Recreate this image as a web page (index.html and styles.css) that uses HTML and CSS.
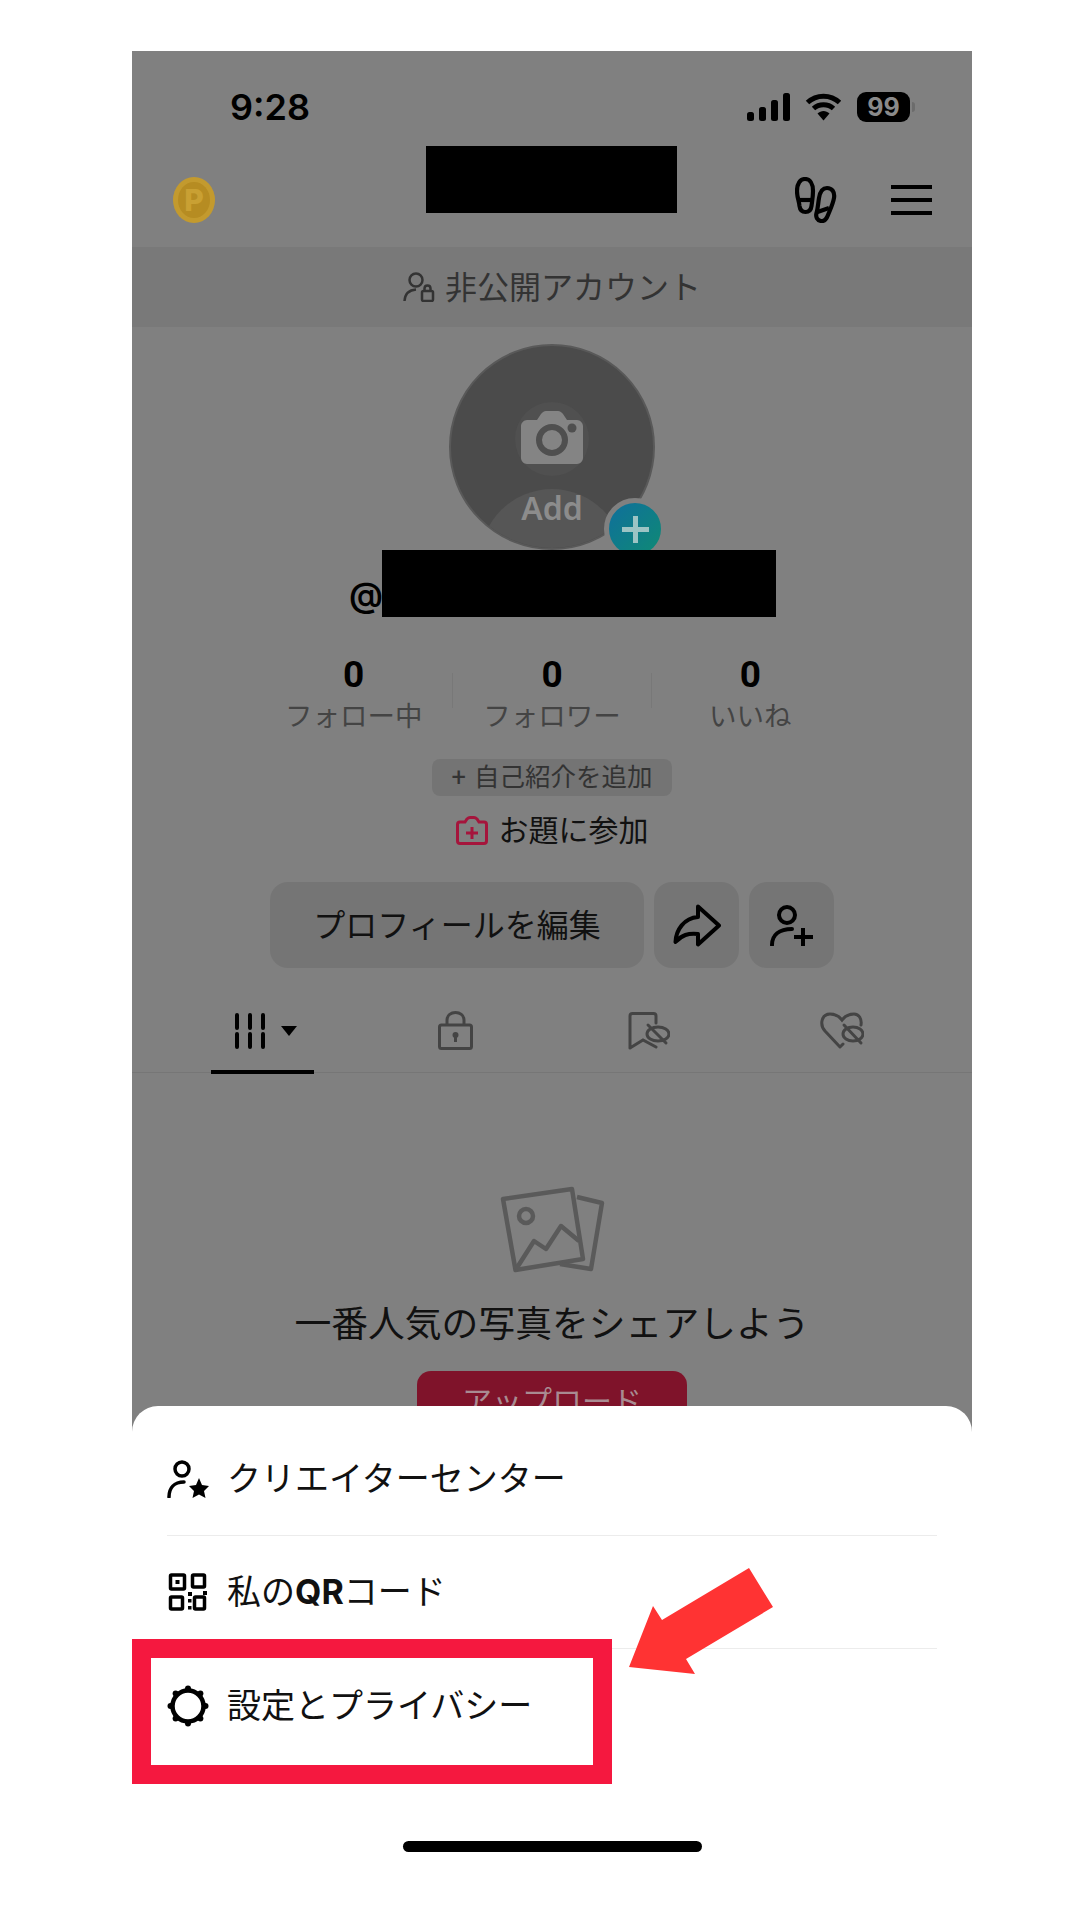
FILE: index.html
```html
<!DOCTYPE html>
<html lang="ja">
<head>
<meta charset="utf-8">
<title>プロフィール</title>
<link rel="stylesheet" href="styles.css">
</head>
<body>
<div class="screen">
    <div class="dimmed">
        <!-- status bar -->
        <div class="statusbar">
            <span class="clock">9:28</span>
            <div class="status-icons">
                <svg class="ic-signal" width="43" height="28" viewBox="0 0 43 28"><rect x="0" y="19" width="7" height="9" rx="2.5"/><rect x="12" y="14" width="7" height="14" rx="2.5"/><rect x="24" y="7" width="7" height="21" rx="2.5"/><rect x="36" y="0" width="7" height="28" rx="2.5"/></svg>
                <svg class="ic-wifi" width="37" height="28" viewBox="0 0 37 28"><path d="M2.5 9.5C11.500 1 25.500 1 34.500 9.500M8.500 15.500C14 10.500 23 10.500 28.500 15.500" fill="none" stroke="#000" stroke-width="5"/><path d="M12.500 20.500C16 17 21 17 24.500 20.500L18.500 27.500Z"/></svg>
                <div class="battery"><span>99</span></div>
                <i class="battery-nub"></i>
            </div>
        </div>

        <!-- top bar -->
        <div class="topbar">
            <svg width="42" height="46" viewBox="0 0 42 46"><ellipse cx="21" cy="23" rx="21" ry="23" fill="#c39a2e"/><ellipse cx="21" cy="23" rx="16" ry="18" fill="#b68c22"/><text x="21" y="34" class="coin-p" text-anchor="middle">P</text></svg>
            <div class="topbar-right">
                <svg width="42" height="46" viewBox="0 0 42 46" fill="none" stroke="#000" stroke-width="4.200"><path d="M10 2C15 2 18 7 18 14C18 20 17 25 16.500 29C16 33 14 35 10.500 35C7 35 5 33 4.500 29C4 24 2 20 2 14C2 7 5 2 10 2Z"/><path d="M4 23H17"/><path d="M32 11C37 11 40 15 39 21C38 27 35 33 33 38C31.500 42 29 44.500 26 44C22 43.500 20.500 40 21.500 36C23 31 23 27 24 21C25 15 27 11 32 11Z"/><path d="M22.500 35L34 31"/></svg>
                <div class="burger"><i></i><i></i><i></i></div>
            </div>
        </div>

        <div class="banner">
            <svg width="32" height="30" viewBox="0 0 32 30" fill="none" stroke="#333" stroke-width="2.500"><circle cx="13" cy="8" r="6.500"/><path d="M1.500 29C2 22 6 18 13 17.500"/><rect x="19" y="19" width="11" height="10" rx="1.500"/><path d="M21.500 19V16.500C21.500 12.500 27.500 12.500 27.500 16.500V19"/></svg>
            <span class="lift">非公開アカウント</span>
        </div>

        <!-- avatar -->
        <div class="avatar">
            <div class="avatar-clip">
                <i class="avatar-glow"></i>
                <i class="avatar-hill"></i>
            </div>
            <svg class="avatar-cam" width="62" height="53" viewBox="0 0 62 53"><path d="M6 9H16L20 3C21 1.500 23 0 25 0H37C39 0 41 1.500 42 3L46 9H56C59 9 62 12 62 15V47C62 50 59 53 56 53H6C3 53 0 50 0 47V15C0 12 3 9 6 9Z" fill="#848484"/><circle cx="31" cy="29" r="13" fill="none" stroke="#4f4f4f" stroke-width="6"/><circle cx="51" cy="17" r="4.500" fill="#4f4f4f"/></svg>
            <span class="avatar-add">Add</span>
            <div class="avatar-plus"><svg width="27" height="27" viewBox="0 0 27 27"><path d="M13.500 0V27M0 13.500H27" stroke="#9cc4c4" stroke-width="5"/></svg></div>
        </div>

        <div class="handle">
            <span class="at">@</span>
            <div class="redact-handle"></div>
        </div>

        <!-- stats -->
        <div class="stats">
            <div class="stat"><b>0</b><span>フォロー中</span></div>
            <i class="stat-line"></i>
            <div class="stat"><b>0</b><span>フォロワー</span></div>
            <i class="stat-line"></i>
            <div class="stat"><b>0</b><span>いいね</span></div>
        </div>

        <div class="bio-pill"><b>+</b><span>自己紹介を追加</span></div>

        <div class="topic">
            <svg width="32" height="29" viewBox="0 0 32 29" fill="none" stroke="#a5153c" stroke-width="3"><path d="M4 6H9L11 3C12 2 13 1.500 14 1.500H18C19 1.500 20 2 21 3L23 6H28C29.500 6 30.500 7 30.500 8.500V25C30.500 26.500 29.500 27.500 28 27.500H4C2.500 27.500 1.500 26.500 1.500 25V8.500C1.500 7 2.500 6 4 6Z"/><path d="M16 11V23M10 17H22"/></svg>
            <span class="lift">お題に参加</span>
        </div>

        <!-- action buttons -->
        <div class="actions">
            <div class="btn btn-edit"><span class="lift">プロフィールを編集</span></div>
            <div class="btn btn-icon">
                <svg width="48" height="43" viewBox="0 0 48 43" fill="none" stroke="#000" stroke-width="4" stroke-linejoin="round"><path d="M25 2.500L46 21.500L25 40.500V30C15 29 9 31 2.500 38C3 26 11 14 25 13Z"/></svg>
            </div>
            <div class="btn btn-icon">
                <svg width="44" height="41" viewBox="0 0 44 41" fill="none" stroke="#000" stroke-width="4"><circle cx="17" cy="10" r="8"/><path d="M2 40C2 30 9 24 22 24" stroke-linecap="round"/><path d="M33 23V41M24 32H43"/></svg>
            </div>
        </div>

        <!-- tabs -->
        <div class="tabs">
            <div class="tab tab-active">
                <svg width="30" height="36" viewBox="0 0 30 36" stroke="#000" stroke-width="4" stroke-linecap="round"><path d="M2 2V15M2 21V34M15 2V15M15 21V34M28 2V15M28 21V34"/></svg>
                <i class="caret"></i>
            </div>
            <div class="tab">
                <svg width="35" height="39" viewBox="0 0 35 39" fill="none" stroke="#444" stroke-width="3"><rect x="1.500" y="14" width="32" height="23.500" rx="2"/><path d="M9 14V9C9 -1 26 -1 26 9V14"/><circle cx="17.500" cy="24" r="3" fill="#444" stroke="none"/><path d="M17.500 24V31"/></svg>
            </div>
            <div class="tab">
                <svg width="42" height="38" viewBox="0 0 42 38" fill="none" stroke="#444" stroke-width="3" stroke-linecap="round"><path d="M2 36V4C2 2.500 3 1.500 4.500 1.500H25.500C27 1.500 28 2.500 28 4V11M2 36L15 28L28 35"/><ellipse cx="30" cy="22" rx="11" ry="7"/><path d="M20 13L38 31"/></svg>
            </div>
            <div class="tab">
                <svg width="44" height="38" viewBox="0 0 44 38" fill="none" stroke="#444" stroke-width="3" stroke-linecap="round"><path d="M20 35L5 19C-1 12 2 2 10 2C15 2 19 4 22 8C25 4 29 2 34 2C39 2 42 7 41 13M20 35L23 32"/><ellipse cx="33" cy="22" rx="10" ry="7"/><path d="M24 13L41 31"/></svg>
            </div>
        </div>

        <!-- empty state -->
        <div class="empty">
            <svg width="105" height="88" viewBox="0 0 105 88" fill="none" stroke="#5a5a5a" stroke-width="4.500" stroke-linejoin="round"><path d="M3 13L72 3L83 73L15.500 84Z"/><path d="M77 11L102 17L91 83L60 78"/><path d="M15.500 84L34 55L46 63L61 40L79 55"/><circle cx="26" cy="30" r="7"/></svg>
            <p class="empty-title">一番人気の写真をシェアしよう</p>
            <div class="upload">アップロード</div>
        </div>
    </div>

    <!-- bottom sheet -->
    <div class="sheet">
        <div class="sheet-row">
            <svg width="42" height="38" viewBox="0 0 42 38"><circle cx="15" cy="9" r="7" fill="none" stroke="#000" stroke-width="3.500"/><path d="M2 37C2 28 7 22 17 22" fill="none" stroke="#000" stroke-width="3.500" stroke-linecap="round"/><path d="M32 18L35 25L42 26L37 31L38.500 38L32 34.500L25.500 38L27 31L22 26L29 25Z"/></svg>
            <span class="lift">クリエイターセンター</span>
        </div>
        <div class="sheet-row">
            <svg width="42" height="38" viewBox="0 0 42 38"><g fill="none" stroke="#000" stroke-width="3.500"><rect x="3.500" y="2" width="14" height="14" rx="1"/><rect x="25.500" y="2" width="12" height="12" rx="1"/><rect x="3.500" y="24" width="12" height="12" rx="1"/><rect x="27.500" y="24" width="10" height="12" rx="1"/></g><rect x="8.500" y="7" width="4" height="4"/><rect x="21" y="19" width="4" height="4"/><rect x="36" y="18" width="4" height="4"/><rect x="21" y="26" width="3.500" height="3.500"/><rect x="21" y="33" width="3.500" height="3.500"/></svg>
            <span class="lift">私の<b>QR</b>コード</span>
        </div>
        <div class="sheet-row">
            <svg width="42" height="42" viewBox="0 0 42 42"><g><circle cx="21" cy="21" r="15.500" fill="none" stroke="#000" stroke-width="4.500"/><circle cx="21" cy="3.500" r="3"/><circle cx="38.500" cy="21" r="3"/><circle cx="21" cy="38.500" r="3"/><circle cx="3.500" cy="21" r="3"/><circle cx="33.400" cy="8.600" r="3"/><circle cx="33.400" cy="33.400" r="3"/><circle cx="8.600" cy="33.400" r="3"/><circle cx="8.600" cy="8.600" r="3"/></g></svg>
            <span class="lift">設定とプライバシー</span>
        </div>
        <div class="homebar"></div>
    </div>

    <!-- annotations on top of the screenshot -->
    <div class="redact-title"></div>
    <div class="callout"></div>
    <svg class="arrow" width="144" height="106" viewBox="0 0 144 106"><polygon points="120,0 144,39 57,91 66,106 0,99 24,38 33,52" fill="#ff3333"/></svg>
</div>
</body>
</html>
```

FILE: styles.css
```css
* {
    box-sizing: border-box;
}

body {
    margin: 0;
    width: 1080px;
    height: 1920px;
    overflow: hidden;
    background: #fff;
    color: #111;
    font-family: "Noto Sans CJK JP", "Noto Sans", sans-serif;
}

.screen {
    position: relative;
    width: 840px;
    height: 1869px;
    margin: 51px 0 0 132px;
}

.dimmed {
    height: 1385px;
    overflow: hidden;
    background: #808080;
}

/* noto sits low in its line box, this pulls the text up to the icon */
.lift {
    padding-bottom: 5px;
}

/* status bar */
.statusbar {
    display: flex;
    justify-content: space-between;
    align-items: center;
    height: 112px;
    padding: 0 57px 0 98px;
}

.clock {
    font-family: Inter, sans-serif;
    font-size: 36px;
    font-weight: 600;
    color: #000;
}

.status-icons {
    display: flex;
    align-items: center;
}

.ic-signal {
    margin-right: 15px;
}

.ic-wifi {
    margin-right: 15px;
}

.battery {
    width: 53px;
    height: 30px;
    border-radius: 9px;
    background: #000;
    color: #8a8a8a;
    font-family: Inter, sans-serif;
    font-size: 25px;
    font-weight: 700;
    line-height: 30px;
    text-align: center;
}

.battery-nub {
    width: 3px;
    height: 10px;
    margin-left: 2px;
    border-radius: 0 3px 3px 0;
    background: #6c6c6c;
}

/* top bar */
.topbar {
    display: flex;
    justify-content: space-between;
    align-items: center;
    height: 74px;
    margin-bottom: 10px;
    padding: 0 40px 0 41px;
}

.coin-p {
    font-family: Inter, sans-serif;
    font-size: 30px;
    font-weight: 800;
    fill: #c9a033;
}

.topbar-right {
    display: flex;
    align-items: center;
    gap: 54px;
}

.burger {
    display: flex;
    flex-direction: column;
    gap: 9px;
    width: 41px;
}

.burger i {
    display: block;
    height: 4px;
    background: #000;
}

.banner {
    display: flex;
    justify-content: center;
    align-items: center;
    gap: 10px;
    height: 80px;
    background: #797979;
    color: #333;
    font-size: 32px;
}

/* avatar */
.avatar {
    position: relative;
    display: flex;
    justify-content: center;
    width: 206px;
    height: 206px;
    margin: 17px auto 0;
}

.avatar-clip {
    position: absolute;
    inset: 0;
    overflow: hidden;
    border: 2px solid #595959;
    border-radius: 50%;
    background: #4b4b4b;
}

.avatar-glow {
    position: absolute;
    top: 56px;
    left: 64px;
    width: 74px;
    height: 74px;
    border-radius: 50%;
    background: #505050;
}

.avatar-hill {
    position: absolute;
    top: 143px;
    left: 29px;
    width: 144px;
    height: 144px;
    border-radius: 50%;
    background: #565656;
}

.avatar-cam {
    position: absolute;
    top: 67px;
    left: 72px;
}

.avatar-add {
    position: absolute;
    top: 144px;
    width: 100%;
    color: #8c8c8c;
    font-family: "Noto Sans", sans-serif;
    font-size: 32px;
    font-weight: 600;
    line-height: 40px;
    text-align: center;
}

.avatar-plus {
    position: absolute;
    top: 154px;
    left: 155px;
    display: flex;
    justify-content: center;
    align-items: center;
    width: 62px;
    height: 62px;
    border: 5px solid #808080;
    border-radius: 50%;
    background: linear-gradient(135deg, #0f6f9c, #0f8a74);
}

.handle {
    position: relative;
    display: flex;
    justify-content: center;
    align-items: flex-end;
    height: 67px;
    padding-left: 21px;
}

.at {
    width: 33px;
    color: #000;
    font-family: Inter, sans-serif;
    font-size: 34px;
    font-weight: 600;
    line-height: 44px;
}

.redact-handle {
    width: 394px;
    height: 67px;
    background: #000;
}

.redact-title {
    position: absolute;
    top: 95px;
    left: 294px;
    width: 251px;
    height: 67px;
    background: #000;
}

/* stats */
.stats {
    display: grid;
    grid-template-columns: 1fr 1px 1fr 1px 1fr;
    width: 594px;
    margin: 39px auto 0;
}

.stat {
    display: flex;
    flex-direction: column;
    align-items: center;
    gap: 3px;
}

.stat b {
    color: #000;
    font-family: Roboto, sans-serif;
    font-size: 37px;
    font-weight: 700;
    line-height: 37px;
}

.stat span {
    color: #444;
    font-size: 27.500px;
    line-height: 36px;
}

.stat-line {
    height: 35px;
    margin-top: 17px;
    background: #787878;
}

.bio-pill {
    display: flex;
    justify-content: center;
    gap: 8px;
    width: 240px;
    height: 37px;
    margin: 27px auto 0;
    border-radius: 8px;
    background: #747474;
    color: #333;
    font-size: 25.500px;
    line-height: 32px;
}

.bio-pill b {
    font-family: Roboto, sans-serif;
    font-weight: 400;
    line-height: 36px;
}

.topic {
    display: flex;
    justify-content: center;
    align-items: center;
    gap: 11px;
    height: 40px;
    margin-top: 14px;
    font-size: 30px;
}

/* action buttons */
.actions {
    display: flex;
    justify-content: center;
    gap: 10px;
    margin-top: 32px;
}

.btn {
    display: flex;
    justify-content: center;
    align-items: center;
    height: 86px;
    border-radius: 18px;
    background: #757575;
}

.btn-edit {
    width: 374px;
    font-size: 32px;
}

.btn-icon {
    width: 85px;
}

/* tabs */
.tabs {
    display: grid;
    grid-template-columns: repeat(4, 1fr);
    height: 105px;
    padding: 0 34px;
    border-bottom: 1px solid #767676;
}

.tab {
    position: relative;
    display: flex;
    justify-content: center;
    align-items: center;
    padding-top: 43px;
    padding-bottom: 23px;
}

.tab-active {
    gap: 16px;
    padding-left: 7px;
}

.tab-active::after {
    content: "";
    position: absolute;
    bottom: -1px;
    left: 45px;
    width: 103px;
    height: 4px;
    background: #000;
}

.caret {
    width: 0;
    height: 0;
    margin-top: 1px;
    border-top: 10px solid #000;
    border-left: 8.500px solid transparent;
    border-right: 8.500px solid transparent;
}

/* empty state */
.empty {
    display: flex;
    flex-direction: column;
    align-items: center;
    padding-top: 113px;
}

.empty-title {
    margin: 22px 0 0;
    font-size: 36.800px;
    line-height: 50px;
}

.upload {
    width: 270px;
    height: 70px;
    margin-top: 25px;
    border-radius: 14px;
    background: #7f132a;
    color: #a98b92;
    font-size: 30px;
    line-height: 56px;
    text-align: center;
}

/* bottom sheet */
.sheet {
    position: relative;
    height: 514px;
    margin-top: -30px;
    padding: 17px 35px 0;
    border-radius: 26px 26px 0 0;
    background: #fff;
}

.sheet-row {
    display: flex;
    align-items: center;
    gap: 18px;
    height: 113px;
    border-bottom: 1px solid #ececec;
    font-size: 34px;
}

.sheet-row:nth-child(3) {
    border-bottom: none;
}

.sheet-row b {
    font-family: Inter, sans-serif;
    font-weight: 700;
}

.homebar {
    width: 299px;
    height: 11px;
    margin: 79px auto 0;
    border-radius: 6px;
    background: #000;
}

/* annotations */
.callout {
    position: absolute;
    top: 1588px;
    left: 0;
    width: 480px;
    height: 145px;
    border: 19px solid #f5183f;
}

.arrow {
    position: absolute;
    top: 1517px;
    left: 497px;
}
```
